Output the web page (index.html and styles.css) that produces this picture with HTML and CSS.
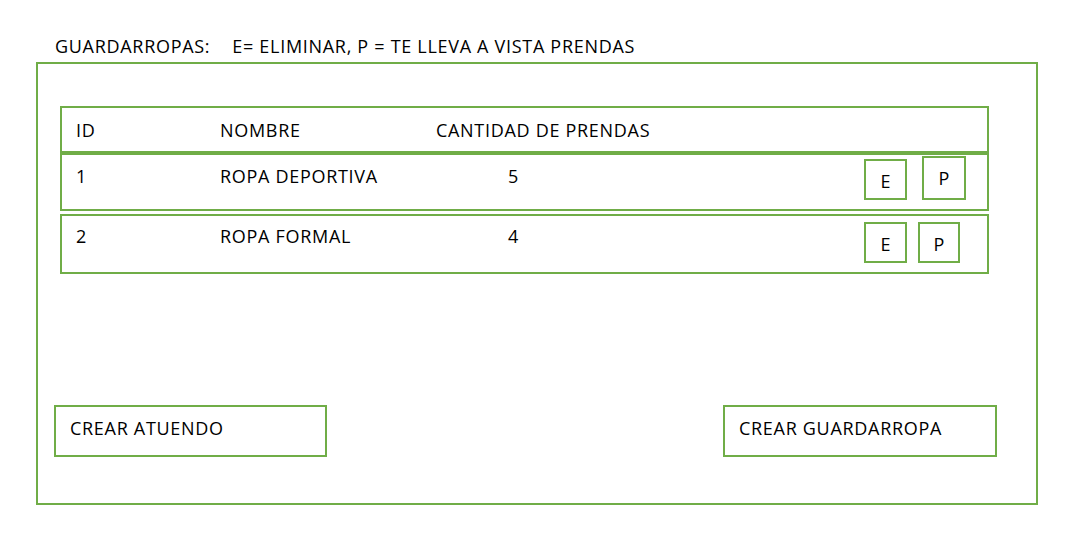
FILE: index.html
```html
<!DOCTYPE html>
<html lang="es">
<head>
<meta charset="utf-8">
<title>Guardarropas</title>
<link rel="stylesheet" href="styles.css">
</head>
<body>
<div class="title"><span class="title-main">GUARDARROPAS:</span><span class="title-legend">E= ELIMINAR, P = TE LLEVA A VISTA PRENDAS</span></div>
<div class="frame">
  <div class="table">
    <div class="row head">
      <div class="cell c-id">ID</div>
      <div class="cell c-name">NOMBRE</div>
      <div class="cell c-qty">CANTIDAD DE PRENDAS</div>
    </div>
    <div class="row item item-1">
      <div class="cell c-id">1</div>
      <div class="cell c-name">ROPA DEPORTIVA</div>
      <div class="cell c-qty num">5</div>
      <div class="actions actions-1">
        <div class="btn btn-e">E</div>
        <div class="btn btn-p1">P</div>
      </div>
    </div>
    <div class="row item item-2">
      <div class="cell c-id">2</div>
      <div class="cell c-name">ROPA FORMAL</div>
      <div class="cell c-qty num">4</div>
      <div class="actions actions-2">
        <div class="btn btn-e">E</div>
        <div class="btn btn-p2">P</div>
      </div>
    </div>
  </div>
  <div class="footer">
    <div class="big-btn">CREAR ATUENDO</div>
    <div class="big-btn">CREAR GUARDARROPA</div>
  </div>
</div>
</body>
</html>
```
FILE: styles.css
```css
* { box-sizing: border-box; }
body {
  margin: 0;
  font-family: "Open Sans", "Liberation Sans", sans-serif;
  font-size: 18px;
  letter-spacing: 0.7px;
  color: #000;
  background: #fff;
}
.title {
  padding: 34px 0 0 55px;
  line-height: 24px;
  height: 62px;
  white-space: nowrap;
}
.title-legend { margin-left: 22px; }
.frame {
  margin-left: 36px;
  width: 1002px;
  height: 443px;
  border: 2px solid #70ad47;
  padding-top: 42px;
}
.table {
  margin-left: 22px;
  width: 929px;
}
.row {
  display: flex;
  border: 2px solid #70ad47;
  padding-left: 14px;
  line-height: 24px;
}
.head {
  height: 47px;
  padding-top: 10px;
}
.item {
  height: 58px;
  padding-top: 9px;
}
.item-2 {
  height: 60px;
  margin-top: 3px;
  padding-top: 8px;
}
.c-id { width: 144px; }
.c-name { width: 216px; }
.num { padding-left: 72px; }
.actions {
  margin-left: auto;
  display: flex;
  align-items: flex-end;
  align-self: flex-end;
  margin-bottom: 9px;
}
.actions-1 { gap: 15px; margin-right: 21px; }
.actions-2 { gap: 11px; margin-right: 27px; }
.btn {
  border: 2px solid #70ad47;
  display: flex;
  align-items: center;
  justify-content: center;
  padding-top: 3px;
  width: 43px;
  height: 41px;
  letter-spacing: 0;
}
.btn-p1 { width: 44px; height: 44px; padding-top: 0; }
.btn-p2 { width: 42px; height: 41px; }
.footer {
  display: flex;
  justify-content: space-between;
  margin-top: 131px;
  padding: 0 39px 0 16px;
}
.big-btn {
  width: 273px;
  height: 52px;
  border: 2px solid #70ad47;
  padding: 9px 0 0 14px;
  line-height: 24px;
}
.big-btn + .big-btn { width: 274px; }
```
